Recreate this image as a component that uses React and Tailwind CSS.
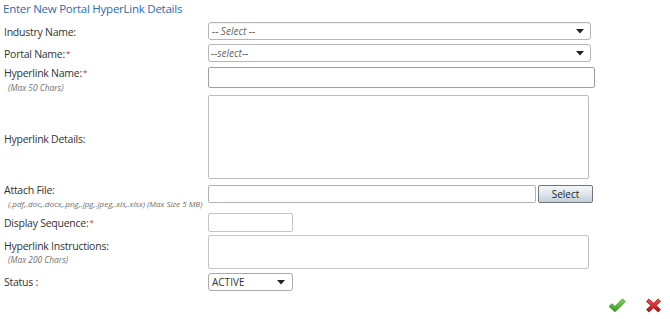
import React from "react";

const font = { fontFamily: '"Open Sans", "Noto Sans", sans-serif' };

function Arrow() {
  return (
    <svg width="8" height="5" viewBox="0 0 8 5" className="shrink-0">
      <path d="M0 0 L8 0 L4 4.5 Z" fill="#222" />
    </svg>
  );
}

function Req() {
  return <span className="text-[#e02020] relative -top-[2px] text-[8px] ml-[1px]">*</span>;
}

const lbl = "pl-[4px] text-[10.5px] tracking-[-0.25px] leading-[16px] whitespace-nowrap";
const hint = "text-[8.4px] italic text-[#6f6f6f] pl-[8px] leading-[11px] whitespace-nowrap";

export default function App() {
  return (
    <div className="w-[670px] h-[319px] bg-white text-[#333] overflow-hidden" style={font}>
      <div className="h-[22px] pl-[3px] text-[11.5px] tracking-[-0.25px] leading-[17px] text-[#2a6cb6]">Enter New Portal HyperLink Details</div>

      {/* Industry */}
      <div className="flex h-[18px] items-center">
        <div className={`w-[208px] ${lbl} mt-[2px]`}>Industry Name:</div>
        <div className="w-[383px] h-[18px] border border-[#b5b5b5] rounded-[3px] flex items-center justify-between pl-[3px] pr-[6px] shadow-[inset_0_1px_1px_rgba(0,0,0,0.06)]">
          <span className="text-[10px] italic text-[#666]">-- Select --</span>
          <Arrow />
        </div>
      </div>

      {/* Portal */}
      <div className="flex mt-[4px] h-[18px] items-center">
        <div className={`w-[208px] ${lbl} mt-[2px]`}>Portal Name:<Req /></div>
        <div className="w-[383px] h-[18px] border border-[#b5b5b5] rounded-[3px] flex items-center justify-between pl-[2px] pr-[6px]">
          <span className="text-[10px] italic text-[#666]">--select--</span>
          <Arrow />
        </div>
      </div>

      {/* Hyperlink Name */}
      <div className="flex mt-[5px] h-[21px]">
        <div className="w-[208px] -mt-[2px]">
          <div className={lbl}>Hyperlink Name:<Req /></div>
          <div className={hint}>(Max 50 Chars)</div>
        </div>
        <div className="w-[387px] h-[21px] border border-[#a0a0a0] rounded-[2px]" />
      </div>

      {/* Hyperlink Details */}
      <div className="flex mt-[7px] h-[84px] items-center">
        <div className={`w-[208px] ${lbl} pt-[3px]`}>Hyperlink Details:</div>
        <div className="w-[381px] h-[84px] border border-[#bdbdbd] rounded-[2px]" />
      </div>

      {/* Attach File */}
      <div className="flex mt-[6px] h-[18px]">
        <div className="w-[208px] -mt-[3px]">
          <div className={lbl}>Attach File:</div>
          <div className="text-[8px] italic text-[#6f6f6f] pl-[8px] leading-[11px] whitespace-nowrap">(.pdf,.doc,.docx,.png,.jpg,.jpeg,.xls,.xlsx) (Max Size 5 MB)</div>
        </div>
        <div className="w-[328px] h-[18px] border border-[#b0b4ba] rounded-[2px]" />
        <div className="ml-[2px] w-[55px] h-[18px] border border-[#707880] rounded-[2px] bg-gradient-to-b from-[#f3f6f9] via-[#dfe6ec] to-[#c4cfda] flex items-center justify-center text-[10px] text-[#222]">
          Select
        </div>
      </div>

      {/* Display Sequence */}
      <div className="flex mt-[10px] h-[19px] items-center">
        <div className={`w-[208px] ${lbl} pt-[1px]`}>Display Sequence:<Req /></div>
        <div className="w-[85px] h-[19px] border border-[#c4c4c4] rounded-[2px]" />
      </div>

      {/* Hyperlink Instructions */}
      <div className="flex mt-[3px] h-[34px]">
        <div className="w-[208px] pt-[3px]">
          <div className={lbl}>Hyperlink Instructions:</div>
          <div className={hint}>(Max 200 Chars)</div>
        </div>
        <div className="w-[381px] h-[34px] border border-[#c4c4c4] rounded-[2px]" />
      </div>

      {/* Status */}
      <div className="flex mt-[4px] h-[18px] items-center">
        <div className={`w-[208px] ${lbl}`}>Status :</div>
        <div className="w-[85px] h-[18px] border border-[#aaaaaa] rounded-[3px] flex items-center justify-between pl-[3px] pr-[7px]">
          <span className="text-[10px] text-[#333]">ACTIVE</span>
          <Arrow />
        </div>
      </div>

      {/* Actions */}
      <div className="flex justify-end items-center gap-[19px] pr-[8px] mt-[7px]">
        <svg width="18" height="15" viewBox="0 0 18 15">
          <defs>
            <linearGradient id="gc" x1="0" y1="0" x2="0" y2="1">
              <stop offset="0" stopColor="#8fd35a" />
              <stop offset="1" stopColor="#2f9a1e" />
            </linearGradient>
          </defs>
          <path d="M1 8.5 L4 5.8 L7 8.5 L14.5 1 L17.2 3.6 L7 13.8 Z" fill="url(#gc)" stroke="#2a8a1a" strokeWidth="0.8" strokeLinejoin="round" />
        </svg>
        <svg width="17" height="15" viewBox="0 0 17 15">
          <defs>
            <linearGradient id="gx" x1="0" y1="0" x2="0" y2="1">
              <stop offset="0" stopColor="#f05050" />
              <stop offset="1" stopColor="#b01010" />
            </linearGradient>
          </defs>
          <path d="M1.5 3.5 L3.8 1 L8.5 5.2 L13.2 1 L15.5 3.5 L11 7.5 L15.5 11.5 L13.2 14 L8.5 9.8 L3.8 14 L1.5 11.5 L6 7.5 Z" fill="url(#gx)" stroke="#a01010" strokeWidth="0.8" strokeLinejoin="round" />
        </svg>
      </div>
    </div>
  );
}
